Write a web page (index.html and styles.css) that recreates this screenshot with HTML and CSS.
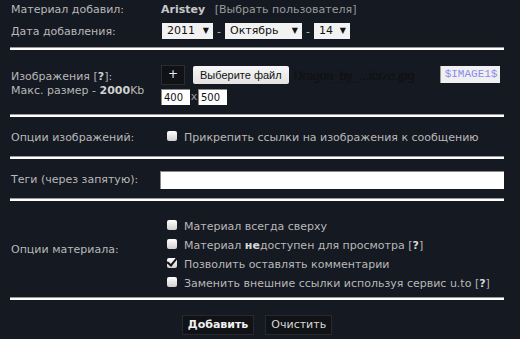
FILE: index.html
```html
<!DOCTYPE html>
<html lang="ru">
<head>
    <meta charset="UTF-8">
    <title>Добавление материала</title>
    <link rel="stylesheet" href="styles.css">
</head>
<body>
    <form class="add-form">
        <div class="section top-section">
            <div class="row row-author">
                <div class="label">Материал добавил:</div>
                <div class="value"><b class="author">Aristey</b> <span class="choose-user">[Выбрать пользователя]</span></div>
            </div>
            <div class="row row-date">
                <div class="label">Дата добавления:</div>
                <div class="value date-line">
                    <span class="fake-select sel-year">2011 <i>&#9660;</i></span>
                    <span class="dash">-</span>
                    <span class="fake-select sel-month">Октябрь <i>&#9660;</i></span>
                    <span class="dash">-</span>
                    <span class="fake-select sel-day">14 <i>&#9660;</i></span>
                </div>
            </div>
        </div>

        <div class="section images-section">
            <div class="label">
                Изображения [<b>?</b>]:<br>
                Макс. размер - <b>2000</b>Kb
            </div>
            <div class="value">
                <div class="file-line">
                    <span class="btn-plus">+</span>
                    <span class="btn-file">Выберите файл</span>
                    <span class="file-name">Dragon_by_...ierze.jpg</span>
                    <span class="image-code">$IMAGE1$</span>
                </div>
                <div class="size-line">
                    <span class="size-input">400</span>
                    <span class="size-x">x</span>
                    <span class="size-input">500</span>
                </div>
            </div>
        </div>

        <div class="section single-section">
            <div class="label">Опции изображений:</div>
            <div class="value">
                <label class="check"><span class="box"></span><span>Прикрепить ссылки на изображения к сообщению</span></label>
            </div>
        </div>

        <div class="section single-section">
            <div class="label">Теги (через запятую):</div>
            <div class="value"><span class="tags-input"></span></div>
        </div>

        <div class="section options-section">
            <div class="label">Опции материала:</div>
            <div class="value checks">
                <label class="check"><span class="box"></span><span>Материал всегда сверху</span></label>
                <label class="check"><span class="box"></span><span>Материал <b>не</b>доступен для просмотра [<b>?</b>]</span></label>
                <label class="check"><span class="box checked"></span><span>Позволить оставлять комментарии</span></label>
                <label class="check"><span class="box"></span><span>Заменить внешние ссылки используя сервис u.to [<b>?</b>]</span></label>
            </div>
        </div>

        <div class="actions">
            <span class="btn-dark btn-submit">Добавить</span>
            <span class="btn-dark">Очистить</span>
        </div>
    </form>
</body>
</html>
```

FILE: styles.css
```css
body {
    margin: 0;
    padding: 0;
    background-color: #151922;
    color: #b8b8b8;
    font-family: "DejaVu Sans", Verdana, sans-serif;
    font-size: 11px;
}

.add-form {
    width: 494px;
    margin-left: 10px;
}

.section {
    display: flex;
    align-items: center;
    border-bottom: 2px solid #fff;
    box-shadow: 0 -1px 0 #9a9a9a inset;
}

.label {
    width: 150px;
    padding-left: 1px;
    flex-shrink: 0;
}

.value {
    flex: 1;
}

/* верхний блок */
.top-section {
    display: block;
    height: 50px;
    padding-top: 2px;
    box-sizing: border-box;
}

.top-section .row {
    display: flex;
    align-items: center;
}

.row-author {
    height: 15px;
}

.row-date {
    height: 20px;
    margin-top: 4px;
}

.author {
    color: #c8c8c8;
    margin-right: 6px;
}

.choose-user {
    color: #9a9a9a;
}

.date-line {
    display: flex;
    align-items: center;
    gap: 4px;
    padding-left: 1px;
}

.fake-select {
    display: inline-block;
    background: #f2f2f2;
    color: #111;
    font-size: 11px;
    height: 16px;
    line-height: 16px;
    padding: 0 4px 0 5px;
    box-sizing: border-box;
}

.fake-select i {
    font-style: normal;
    font-size: 8px;
    float: right;
}

.sel-year { width: 51px; }
.sel-month { width: 77px; }
.sel-day { width: 36px; }

/* изображения */
.images-section {
    height: 65px;
}

.images-section .label {
    line-height: 14px;
    padding-top: 2px;
}

.images-section .label b {
    color: #d0d0d0;
}

.file-line {
    display: flex;
    align-items: center;
    margin-top: 4px;
    white-space: nowrap;
}

.file-line span {
    flex-shrink: 0;
}

.btn-plus {
    width: 22px;
    height: 18px;
    background: #101216;
    border: 1px solid #2a2d33;
    color: #eee;
    font-size: 12px;
    text-align: center;
    line-height: 17px;
}

.btn-file {
    margin-left: 8px;
    height: 18px;
    padding: 0 7px;
    line-height: 18px;
    background: linear-gradient(#f7f7f7, #e3e3e3);
    border-radius: 2px;
    color: #111;
    font-family: "Liberation Sans", Arial, sans-serif;
    font-size: 11px;
}

.file-name {
    margin-left: 5px;
    color: #15171b;
    font-family: "Liberation Sans", Arial, sans-serif;
    font-size: 12px;
    width: 146px;
    padding-top: 3px;
    text-shadow: 0 0 0 #000;
}

.image-code {
    background: #f0f0f0;
    color: #8a8aee;
    font-family: "Liberation Mono", "Courier New", monospace;
    font-size: 11px;
    height: 17px;
    line-height: 17px;
    padding: 0 3px 0 4px;
    border-left: 1px solid #999;
}

.size-line {
    display: flex;
    align-items: center;
    margin-top: 4px;
}

.size-input {
    width: 29px;
    height: 16px;
    background: #fff;
    color: #111;
    font-size: 10px;
    line-height: 16px;
    padding-left: 2px;
    box-sizing: border-box;
    border-top: 1px solid #888;
    border-left: 1px solid #888;
}

.size-x {
    width: 8px;
    text-align: center;
    color: #999;
}

/* строки с одной опцией */
.single-section {
    height: 40px;
}

.tags-input {
    display: block;
    height: 17px;
    background: #fff;
    border-top: 1px solid #888;
    border-left: 1px solid #888;
    margin-top: 1px;
    margin-left: -1px;
}

.check {
    display: flex;
    align-items: center;
    height: 19px;
}

.box {
    flex-shrink: 0;
    width: 10px;
    height: 10px;
    border-radius: 2px;
    background: linear-gradient(#fff, #cfcfcf);
    margin: 0 7px 2px 6px;
    position: relative;
}

.box.checked::after {
    content: "";
    position: absolute;
    left: 2px;
    top: -2px;
    width: 4px;
    height: 8px;
    border: solid #111;
    border-width: 0 2px 2px 0;
    transform: rotate(40deg);
}

.options-section {
    height: 97px;
}

.checks {
    padding-top: 10px;
}

.checks b {
    color: #d8d8d8;
}

/* кнопки */
.actions {
    display: flex;
    justify-content: center;
    gap: 11px;
    padding-top: 15px;
}

.btn-dark {
    background: #101216;
    border: 1px solid #262a30;
    color: #d8d8d8;
    height: 18px;
    line-height: 18px;
    padding: 0 5px;
}

.btn-submit {
    font-weight: bold;
    color: #f0f0f0;
}
```
